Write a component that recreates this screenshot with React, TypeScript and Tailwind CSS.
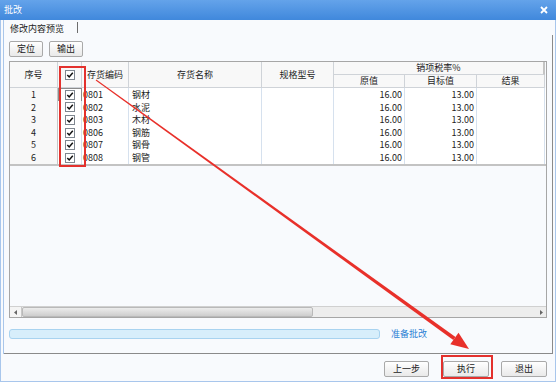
import React from "react";

const font = "font-['Noto_Sans_CJK_SC','Microsoft_YaHei',sans-serif]";
const gridCols = "grid grid-cols-[48px_24px_47px_133px_72px_71px_72px_68px]";

function Check() {
  return (
    <svg width="10" height="10" viewBox="0 0 10 10" className="block">
      <rect x="0.5" y="0.5" width="9" height="9" fill="#ffffff" stroke="#7f8790" />
      <polyline points="2.3,5 4.2,7 7.8,2.8" fill="none" stroke="#111" strokeWidth="1.5" />
    </svg>
  );
}

const rows = [
  { n: "1", code: "0801", name: "钢材" },
  { n: "2", code: "0802", name: "水泥" },
  { n: "3", code: "0803", name: "木材" },
  { n: "4", code: "0806", name: "钢筋" },
  { n: "5", code: "0807", name: "钢骨" },
  { n: "6", code: "0808", name: "钢管" },
];

function Btn({ label, w }: { label: string; w: string }) {
  return (
    <div
      className={`${w} h-[16px] flex items-center justify-center rounded-[2px] border border-[#a9a9a9] bg-[linear-gradient(#ffffff,#e9e9e9)] text-[9px] text-[#222]`}
    >
      {label}
    </div>
  );
}

export default function App() {
  const hc = "border-r border-b border-[#cfd3d8] bg-[#f8f8f8] flex items-center justify-center";
  return (
    <div className={`relative w-[558px] h-[384px] bg-white overflow-hidden ${font} text-[#1c1c1c]`}>
      <div className="w-[556px] h-[382px] flex flex-col border-x border-b border-[#a8c6ec] bg-[#f8fafd]">
        {/* title bar */}
        <div className="h-[20px] flex items-center justify-between pl-[4px] pr-[8px] bg-[linear-gradient(#64a3ea,#4088dc)] text-white text-[9px] -mx-px">
          <span>批改</span>
          <svg width="8" height="8" viewBox="0 0 8 8">
            <path d="M1 1 L7 7 M7 1 L1 7" stroke="#fff" strokeWidth="1.8" />
          </svg>
        </div>
        {/* panel */}
        <div className="h-[334px] ml-[2px] mr-[2px] flex flex-col border-l border-[#a9c6ea]">
          <div className="h-[15px] flex items-stretch">
            <div className="w-[74px] flex items-center pl-[6px] text-[9px] pt-[2px] border-r border-[#6d6d6d] my-[2px]">
              修改内容预览
            </div>
          </div>
          <div className="flex-1 flex flex-col border-r border-b border-[#8a8a8a] pl-[5px] pr-[5px]">
            <div className="flex gap-[6px] mt-[6px]">
              <Btn label="定位" w="w-[34px]" />
              <Btn label="输出" w="w-[34px]" />
            </div>
            {/* table */}
            <div className="mt-[4px] w-[538px] h-[257px] border border-[#a6a6a6] flex flex-col bg-[#f8fafd] overflow-hidden text-[9px]">
              <div className={`${gridCols} grid-rows-[13px_13px]`}>
                <div className={`${hc} row-span-2`}>序号</div>
                <div className={`${hc} row-span-2`}>
                  <Check />
                </div>
                <div className={`${hc} row-span-2`}>存货编码</div>
                <div className={`${hc} row-span-2`}>存货名称</div>
                <div className={`${hc} row-span-2`}>规格型号</div>
                <div className={`${hc} col-span-3 bg-[#ececec] border-r-[2px] border-r-[#c4c4c4]`}>销项税率%</div>
                <div className={hc}>原值</div>
                <div className={hc}>目标值</div>
                <div className={hc}>结果</div>
              </div>
              {rows.map((r, i) => (
                <div key={r.n} className={`${gridCols} h-[12.6px] bg-white`}>
                  <div className="border-r border-b border-[#c6c6c6] bg-[#f8f8f8] flex items-center justify-center">{r.n}</div>
                  <div
                    className={`border-r border-b flex items-center justify-center ${
                      i === 0 ? "border border-[#8c8c8c]" : "border-[#d6e1ee]"
                    }`}
                  >
                    <Check />
                  </div>
                  <div className="border-r border-b border-[#d6e1ee] flex items-center overflow-hidden pl-[1px]">
                    <span>{r.code}</span>
                  </div>
                  <div className="border-r border-b border-[#d6e1ee] flex items-center pl-[3px]">{r.name}</div>
                  <div className="border-r border-b border-[#d6e1ee]" />
                  <div className="border-r border-b border-[#d6e1ee] flex items-center justify-end pr-[2px]">16.00</div>
                  <div className="border-r border-b border-[#d6e1ee] flex items-center justify-end pr-[2px]">13.00</div>
                  <div className="border-r border-b border-[#d6e1ee]" />
                </div>
              ))}
              <div className="h-[2px] bg-[#c3c3c3]" />
              <div className="flex-1" />
              {/* scrollbar */}
              <div className="h-[11px] flex border-t border-[#d0d0d0] bg-[#ededed]">
                <div className="w-[12px] flex items-center justify-center border-r border-[#c8c8c8] bg-[#f4f4f4]">
                  <svg width="4" height="5" viewBox="0 0 4 5">
                    <path d="M3 0 L0 2.5 L3 5 Z" fill="#666" />
                  </svg>
                </div>
                <div className="w-[291px] rounded-[2px] border border-[#b9b9b9] bg-[linear-gradient(#ececec,#cdcdcd)]" />
                <div className="flex-1" />
                <div className="w-[10px] flex items-center justify-center">
                  <svg width="4" height="5" viewBox="0 0 4 5">
                    <path d="M1 0 L4 2.5 L1 5 Z" fill="#666" />
                  </svg>
                </div>
              </div>
            </div>
            {/* progress */}
            <div className="mt-[9px] flex items-center">
              <div className="w-[371px] h-[10px] rounded-[3px] border border-[#a8d3f0] bg-[#d7eefb]" />
              <span className="ml-[11px] text-[9px] text-[#2a7fd4]">准备批改</span>
            </div>
          </div>
        </div>
        {/* bottom bar */}
        <div className="flex-1 flex justify-end items-start pt-[7px] pr-[8px] gap-[14px]">
          <Btn label="上一步" w="w-[45px]" />
          <div className="flex gap-[12px]">
            <Btn label="执行" w="w-[46px]" />
            <Btn label="退出" w="w-[46px]" />
          </div>
        </div>
      </div>

      {/* annotations */}
      <div className="absolute left-[59px] top-[66px] w-[27px] h-[101px] border-2 border-[#e3312d]" />
      <div className="absolute left-[441px] top-[355px] w-[52px] h-[24px] border-2 border-[#e3312d]" />
      <svg className="absolute left-0 top-0 pointer-events-none" width="558" height="384" viewBox="0 0 558 384">
        <polygon points="95.7,80.4 96.3,79.6 455.5,337 453.3,340" fill="#e8302a" />
        <polygon points="469,349 450.3,344.2 458.5,332.8" fill="#e8302a" />
      </svg>
    </div>
  );
}
